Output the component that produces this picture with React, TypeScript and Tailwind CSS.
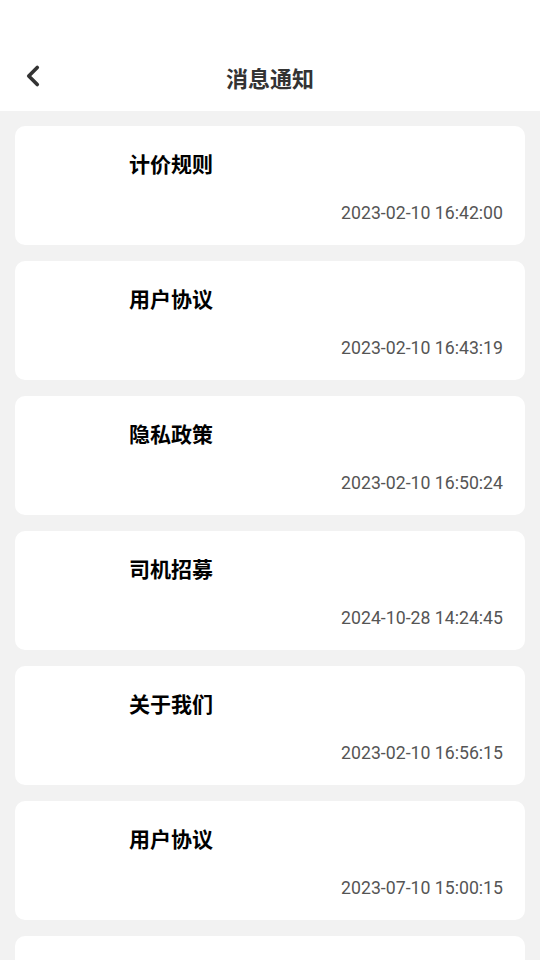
import { ChevronLeft } from 'lucide-react'

interface Notice {
  title: string
  time: string
}

const NOTICES: Notice[] = [
  { title: '计价规则', time: '2023-02-10 16:42:00' },
  { title: '用户协议', time: '2023-02-10 16:43:19' },
  { title: '隐私政策', time: '2023-02-10 16:50:24' },
  { title: '司机招募', time: '2024-10-28 14:24:45' },
  { title: '关于我们', time: '2023-02-10 16:56:15' },
  { title: '用户协议', time: '2023-07-10 15:00:15' },
]

export default function App() {
  return (
    <div
      className="w-[540px] h-[960px] overflow-hidden bg-[#f2f2f2]"
      style={{ fontFamily: '"Noto Sans CJK SC", Roboto, sans-serif' }}
    >
      {/* header */}
      <div className="h-[111px] bg-white flex items-end pb-[16px] relative">
        <div className="w-full h-[36px] flex items-center justify-center relative">
          <ChevronLeft size={34} strokeWidth={2.6} className="absolute left-[16px] top-[0px] text-[#333]" />
          <h1 className="text-[22px] font-bold text-[#333] leading-none">消息通知</h1>
        </div>
      </div>

      <div className="px-[15px] pt-[15px] flex flex-col gap-[16px]">
        {NOTICES.map((n, i) => (
          <div key={i} className="bg-white rounded-[10px] h-[119px] flex flex-col pt-[23px] pr-[22px]">
            <div className="pl-[114px] text-[21px] font-bold text-black leading-[28px]">{n.title}</div>
            <div
              className="mt-[23px] text-right text-[17.7px] text-[#555] leading-[26px]"
              style={{ fontFamily: 'Roboto, "Noto Sans CJK SC", sans-serif' }}
            >
              {n.time}
            </div>
          </div>
        ))}
        {/* next card peeking from below */}
        <div className="bg-white rounded-[10px] h-[119px]" />
      </div>
    </div>
  )
}
